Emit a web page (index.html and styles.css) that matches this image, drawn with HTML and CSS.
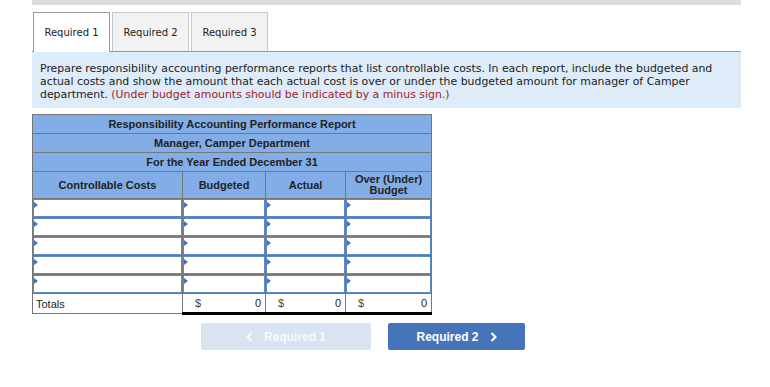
FILE: index.html
```html
<!DOCTYPE html>
<html lang="en">
<head>
    <meta charset="UTF-8">
    <title>Responsibility Accounting Performance Report</title>
    <link rel="stylesheet" href="styles.css">
</head>
<body>
<div class="page">
    <div class="top-bar"></div>

    <div class="tabs">
        <div class="tab active">Required 1</div>
        <div class="tab">Required 2</div>
        <div class="tab">Required 3</div>
    </div>

    <div class="instructions">
        Prepare responsibility accounting performance reports that list controllable costs. In each report, include the budgeted and
        actual costs and show the amount that each actual cost is over or under the budgeted amount for manager of Camper<br>
        department. <span class="hint">(Under budget amounts should be indicated by a minus sign.)</span>
    </div>

    <table class="report">
        <colgroup>
            <col class="c-name">
            <col class="c-num">
            <col class="c-num2">
            <col class="c-num3">
        </colgroup>
        <tr class="title"><th colspan="4">Responsibility Accounting Performance Report</th></tr>
        <tr class="title"><th colspan="4">Manager, Camper Department</th></tr>
        <tr class="title"><th colspan="4">For the Year Ended December 31</th></tr>
        <tr class="heads">
            <th>Controllable Costs</th>
            <th>Budgeted</th>
            <th>Actual</th>
            <th>Over (Under)<br>Budget</th>
        </tr>
        <tr class="entry">
            <td><input type="text"></td><td><input type="text"></td><td><input type="text"></td><td><input type="text"></td>
        </tr>
        <tr class="entry">
            <td><input type="text"></td><td><input type="text"></td><td><input type="text"></td><td><input type="text"></td>
        </tr>
        <tr class="entry">
            <td><input type="text"></td><td><input type="text"></td><td><input type="text"></td><td><input type="text"></td>
        </tr>
        <tr class="entry">
            <td><input type="text"></td><td><input type="text"></td><td><input type="text"></td><td><input type="text"></td>
        </tr>
        <tr class="entry">
            <td><input type="text"></td><td><input type="text"></td><td><input type="text"></td><td><input type="text"></td>
        </tr>
        <tr class="totals">
            <td>Totals</td>
            <td class="amount"><span>$</span><span>0</span></td>
            <td class="amount"><span>$</span><span>0</span></td>
            <td class="amount"><span>$</span><span>0</span></td>
        </tr>
    </table>

    <div class="nav">
        <button class="nav-btn prev" disabled>
            <svg class="chev" width="7" height="10" viewBox="0 0 7 10"><path d="M5.5 1 L1.5 5 L5.5 9" fill="none" stroke="currentColor" stroke-width="2"/></svg>
            Required 1
        </button>
        <button class="nav-btn next">
            Required 2
            <svg class="chev" width="7" height="10" viewBox="0 0 7 10"><path d="M1.5 1 L5.5 5 L1.5 9" fill="none" stroke="currentColor" stroke-width="2"/></svg>
        </button>
    </div>
</div>
</body>
</html>
```

FILE: styles.css
```css
body {
    margin: 0;
    background-color: #ffffff;
    font-family: "DejaVu Sans", Verdana, sans-serif;
    color: #222;
}
.page {
    width: 709px;
    margin-left: 32px;
}
.top-bar {
    height: 5px;
    background-color: #dddddd;
}
.tabs {
    display: flex;
    gap: 2px;
    margin-top: 7px;
    padding-left: 1px;
    border-bottom: 1px solid #999;
}
.tab {
    width: 75px;
    height: 38px;
    line-height: 39px;
    text-align: center;
    font-size: 10px;
    background-color: #f2f2f2;
    border: 1px solid #c8c8c8;
    border-bottom: none;
    color: #222;
}
.tab.active {
    background-color: #ffffff;
    border-color: #999;
    margin-bottom: -1px;
    height: 39px;
}
.instructions {
    background-color: #deebf8;
    padding: 10px 8px 7px;
    font-size: 10.9px;
    line-height: 13px;
    color: #222;
}
.hint {
    color: #a11a2a;
}
.report {
    margin-top: 6px;
    width: 400px;
    border-collapse: collapse;
    font-family: "Liberation Sans", Arial, sans-serif;
    font-size: 11px;
    border: 1px solid #777;
}
.c-name { width: 150px; }
.c-num { width: 83px; }
.c-num2 { width: 80px; }
.c-num3 { width: 86px; }
.report th {
    background-color: #82ade7;
    border: 1px solid #777;
    color: #222;
    font-weight: bold;
    padding: 0;
}
.report .title th {
    height: 18px;
}
.report .heads th {
    height: 26px;
    line-height: 11px;
}
.report .entry td {
    border: 1px solid #777;
    padding: 0;
    height: 18px;
    position: relative;
}
.report .entry input {
    display: block;
    box-sizing: border-box;
    width: 100%;
    height: 18px;
    margin: 0;
    border: 1px solid #5d89c9;
    background-color: #ffffff;
}
/* little marker in the corner of each entry cell */
.report .entry td::before {
    content: "";
    position: absolute;
    left: 1px;
    top: 3px;
    border-left: 4px solid #3d72c4;
    border-top: 3px solid transparent;
    border-bottom: 3px solid transparent;
}
.report .totals td {
    height: 18px;
    padding: 0 3px;
    border-left: 1px solid #777;
    border-right: 1px solid #777;
    border-top: 1px solid #777;
}
.report .totals td.amount {
    border-bottom: 3px solid #000;
    padding: 0 4px 0 12px;
}
.report .totals td.amount span:first-child {
    float: left;
    color: #444;
}
.report .totals td.amount span:last-child {
    float: right;
}
.nav {
    display: flex;
    gap: 17px;
    margin-top: 8px;
    margin-left: 169px;
}
.nav-btn {
    display: flex;
    align-items: center;
    justify-content: center;
    gap: 11px;
    height: 27px;
    border: none;
    border-radius: 2px;
    font-family: "Liberation Sans", Arial, sans-serif;
    font-size: 12px;
    font-weight: bold;
    color: #ffffff;
}
.nav-btn.prev {
    width: 170px;
    background-color: #dae3f1;
    color: #f6f8fc;
}
.nav-btn.next {
    width: 137px;
    background-color: #4674b9;
}
```
